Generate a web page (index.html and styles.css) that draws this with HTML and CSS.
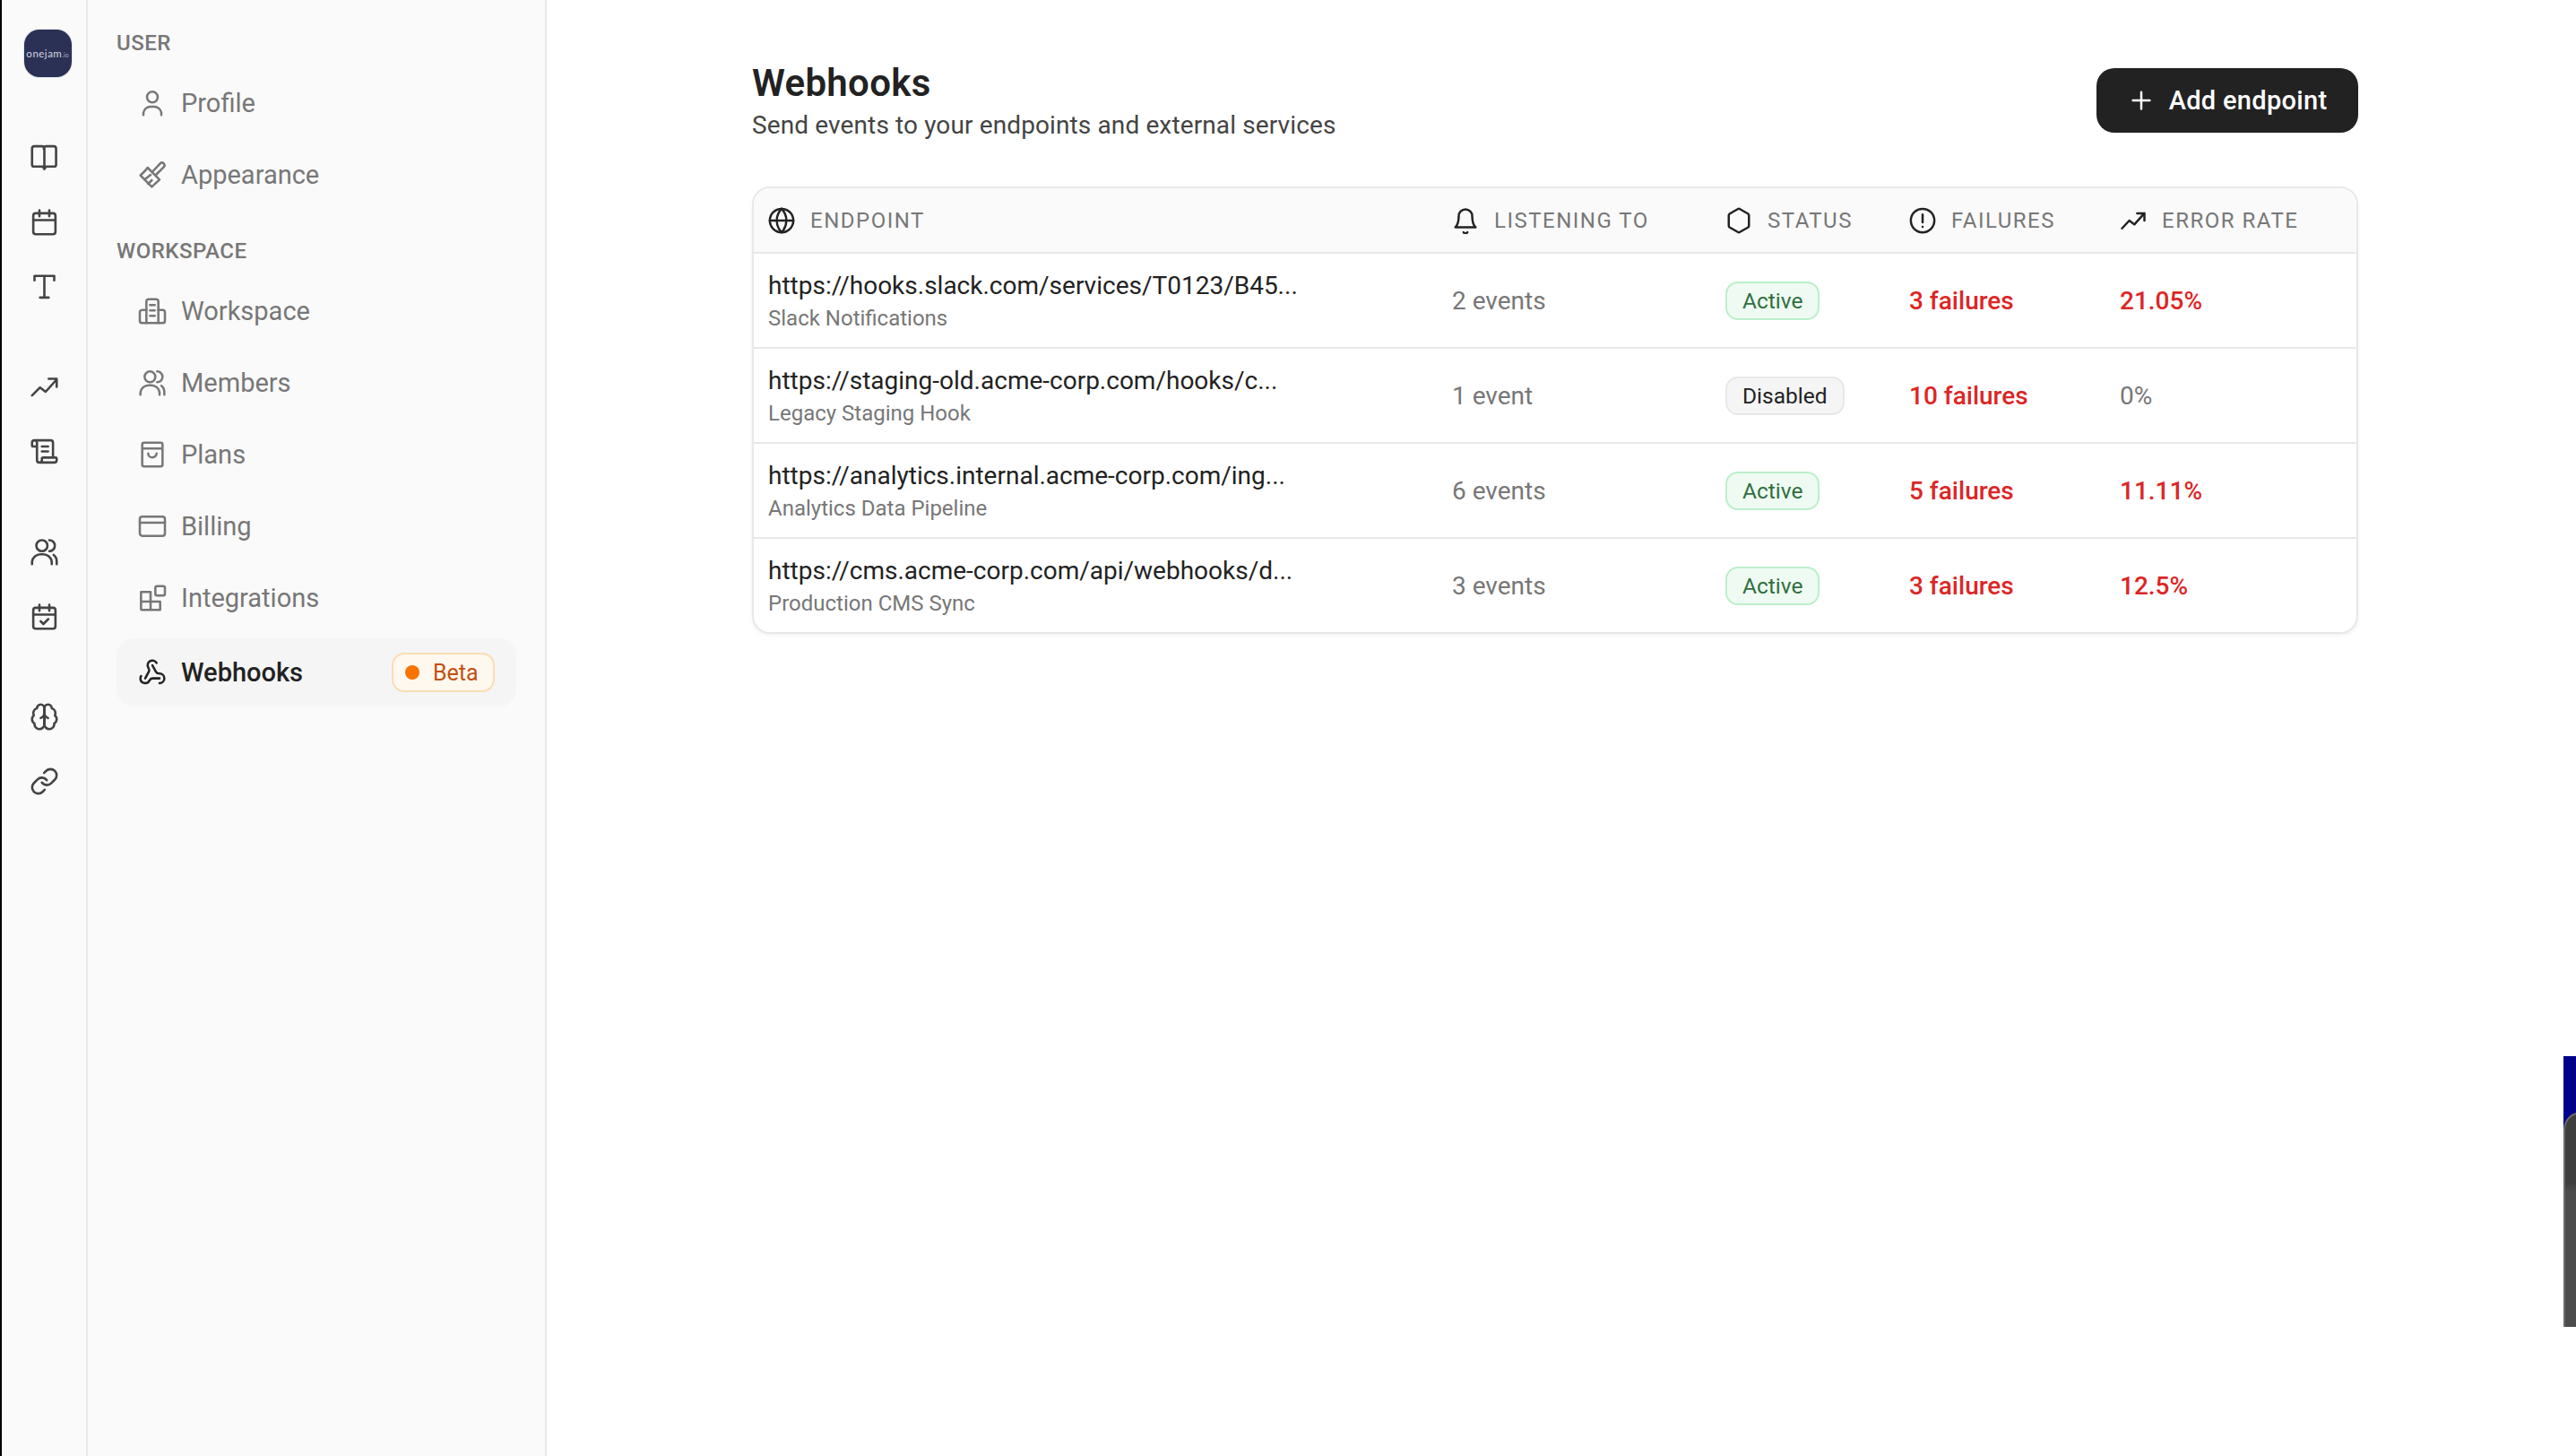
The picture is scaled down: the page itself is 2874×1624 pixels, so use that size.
FILE: index.html
```html
<!DOCTYPE html>
<html lang="en">
<head>
<meta charset="utf-8">
<title>Webhooks</title>
<link rel="stylesheet" href="styles.css">
</head>
<body>
<div class="edge"></div>
<aside class="rail">
  <div class="logo"><span>onejam<small>.io</small></span></div>
  <div class="rail-group">
    <svg class="ic" viewBox="0 0 24 24"><path d="M12 21.500l-1.300-2H3.500a1.500 1.500 0 0 1-1.500-1.500V5a2 2 0 0 1 2-2h6a2 2 0 0 1 2 2v16.500l1.300-2h6.700a1.500 1.500 0 0 0 1.500-1.500V5a2 2 0 0 0-2-2h-6a2 2 0 0 0-2 2"/></svg>
    <svg class="ic" viewBox="0 0 24 24"><rect x="3" y="5" width="18" height="17" rx="2"/><path d="M3 10.500h18M8 2.500v5M16 2.500v5"/></svg>
    <svg class="ic" viewBox="0 0 24 24"><path d="M4 7V3.500h16V7M12 3.500V21M8.500 21h7"/></svg>
  </div>
  <div class="rail-group">
    <svg class="ic" viewBox="0 0 24 24"><path d="M2 19l6.500-6.500 4.500 3.500 9-10M15.500 5.500H22V12"/></svg>
    <svg class="ic" viewBox="0 0 24 24"><path d="M15 12h-5M15 8h-5M19 17V5a2 2 0 0 0-2-2H4M8 21h12a2 2 0 0 0 2-2v-1a1 1 0 0 0-1-1H11a1 1 0 0 0-1 1v1a2 2 0 1 1-4 0V5a2 2 0 1 0-4 0v2a1 1 0 0 0 1 1h3"/></svg>
  </div>
  <div class="rail-group">
    <svg class="ic" viewBox="0 0 24 24"><circle cx="10" cy="7" r="4.500"/><path d="M2 22v-2a7 7 0 0 1 7-6h2a7 7 0 0 1 7 6v2" /><path d="M16 2.500a4.500 4.500 0 0 1 0 9M19.500 14.500a6.500 6.500 0 0 1 2.500 5.500v2"/></svg>
    <svg class="ic" viewBox="0 0 24 24"><rect x="3" y="5" width="18" height="17" rx="2"/><path d="M3 10.500h18M8 2.500v5M16 2.500v5M9 16l2.200 2.200 4-4"/></svg>
  </div>
  <div class="rail-group">
    <svg class="ic" viewBox="0 0 24 24"><path d="M12 5a3 3 0 1 0-5.997.125 4 4 0 0 0-2.526 5.770 4 4 0 0 0 .556 6.588A4 4 0 1 0 12 18Z"/><path d="M12 5a3 3 0 1 1 5.997.125 4 4 0 0 1 2.526 5.770 4 4 0 0 1-.556 6.588A4 4 0 1 1 12 18Z"/><path d="M15 13a4.500 4.500 0 0 1-3-4 4.500 4.500 0 0 1-3 4M12 5v13"/></svg>
    <svg class="ic" viewBox="0 0 24 24"><path d="M10 13a5 5 0 0 0 7.540.540l3-3a5 5 0 0 0-7.070-7.070l-1.720 1.710"/><path d="M14 11a5 5 0 0 0-7.540-.540l-3 3a5 5 0 0 0 7.070 7.070l1.710-1.710"/></svg>
  </div>
</aside>
<nav class="sidebar">
  <div class="nav-label first">USER</div>
  <a class="nav-item"><svg class="ic" viewBox="0 0 24 24"><circle cx="12" cy="7" r="4.500"/><path d="M4.500 22v-2a6 6 0 0 1 6-5h3a6 6 0 0 1 6 5v2"/></svg><span>Profile</span></a>
  <a class="nav-item"><svg class="ic" viewBox="0 0 24 24"><path d="M8 6l10 10-6.500 6L2 12.500C4 10.500 6 9 8 6z"/><path d="M5.500 16l5-4M8.500 19.500l3-3M12.500 9l6-6.500a2 2 0 0 1 3 3L15 12"/></svg><span>Appearance</span></a>
  <div class="nav-label">WORKSPACE</div>
  <a class="nav-item"><svg class="ic" viewBox="0 0 24 24"><path d="M7 22V4a2 2 0 0 1 2-2h6a2 2 0 0 1 2 2v18"/><path d="M7 11H3.500a2 2 0 0 0-2 2v7a2 2 0 0 0 2 2h17a2 2 0 0 0 2-2v-7a2 2 0 0 0-2-2H17"/><path d="M10 7h4M10 11.500h4M10 16h4"/></svg><span>Workspace</span></a>
  <a class="nav-item"><svg class="ic" viewBox="0 0 24 24"><circle cx="10" cy="7" r="4.500"/><path d="M2 22v-2a7 7 0 0 1 7-6h2a7 7 0 0 1 7 6v2"/><path d="M16 2.500a4.500 4.500 0 0 1 0 9M19.500 14.500a6.500 6.500 0 0 1 2.500 5.500v2"/></svg><span>Members</span></a>
  <a class="nav-item"><svg class="ic" viewBox="0 0 24 24"><path d="M5 2h14a1.500 1.500 0 0 1 1.500 1.500v17A1.500 1.500 0 0 1 19 22H5a1.500 1.500 0 0 1-1.500-1.500v-17A1.500 1.500 0 0 1 5 2zM3.500 7h17M8.500 11a3.500 3.500 0 0 0 7 0"/></svg><span>Plans</span></a>
  <a class="nav-item"><svg class="ic" viewBox="0 0 24 24"><rect x="1.500" y="4" width="21" height="16" rx="2"/><path d="M1.500 9h21"/></svg><span>Billing</span></a>
  <a class="nav-item"><svg class="ic" viewBox="0 0 24 24"><rect x="14.500" y="2" width="8" height="8" rx="1.500"/><path d="M2.500 7h8v8h8v7h-15a1 1 0 0 1-1-1zM2.500 15h8M10.500 15v7"/></svg><span>Integrations</span></a>
  <a class="nav-item active"><svg class="ic" viewBox="0 0 24 24"><path d="M18 16.980h-5.990c-1.100 0-1.950.940-2.480 1.900A4 4 0 0 1 2 17c.010-.700.200-1.400.570-2"/><path d="M6 17l3.130-5.780c.530-.970.100-2.180-.500-3.100a4 4 0 1 1 6.890-4.060"/><path d="M12 6l3.130 5.730C15.660 12.700 16.900 13 18 13a4 4 0 0 1 0 8"/></svg><span>Webhooks</span><span class="beta"><i></i>Beta</span></a>
</nav>
<main class="main">
  <header class="page-head">
    <div>
      <h1>Webhooks</h1>
      <p>Send events to your endpoints and external services</p>
    </div>
    <button class="add"><svg class="ic" viewBox="0 0 24 24"><path d="M12 4.500v15M4.500 12h15"/></svg>Add endpoint</button>
  </header>
  <section class="table">
    <div class="row head">
      <div class="th"><svg class="ic" viewBox="0 0 24 24"><circle cx="12" cy="12" r="10.500"/><path d="M12 1.500a15 15 0 0 0 0 21 15 15 0 0 0 0-21M1.500 12h21"/></svg>ENDPOINT</div>
      <div class="th"><svg class="ic" viewBox="0 0 24 24"><path d="M10.300 22.500a2 2 0 0 0 3.400 0M6 8a6 6 0 0 1 12 0c0 7 3 10 3 10H3s3-3 3-10"/></svg>LISTENING TO</div>
      <div class="th"><svg class="ic" viewBox="0 0 24 24"><path d="M21 16.500v-9a2 2 0 0 0-1-1.730l-7-4a2 2 0 0 0-2 0l-7 4A2 2 0 0 0 3 7.500v9a2 2 0 0 0 1 1.730l7 4a2 2 0 0 0 2 0l7-4a2 2 0 0 0 1-1.730z"/></svg>STATUS</div>
      <div class="th"><svg class="ic" viewBox="0 0 24 24"><circle cx="12" cy="12" r="10.500"/><path d="M12 6.500v7M12 17.500v.1"/></svg>FAILURES</div>
      <div class="th"><svg class="ic" viewBox="0 0 24 24"><path d="M2 19l6.500-7 4.500 3.500 9-10M15.500 5.500H22V12"/></svg>ERROR RATE</div>
    </div>
    <div class="row">
      <div class="cell"><div class="url">https://hooks.slack.com/services/T0123/B45...</div><div class="sub">Slack Notifications</div></div>
      <div class="cell muted">2 events</div>
      <div class="cell"><span class="badge on">Active</span></div>
      <div class="cell red">3 failures</div>
      <div class="cell red">21.05%</div>
    </div>
    <div class="row">
      <div class="cell"><div class="url">https://staging-old.acme-corp.com/hooks/c...</div><div class="sub">Legacy Staging Hook</div></div>
      <div class="cell muted">1 event</div>
      <div class="cell"><span class="badge off">Disabled</span></div>
      <div class="cell red">10 failures</div>
      <div class="cell muted">0%</div>
    </div>
    <div class="row">
      <div class="cell"><div class="url">https://analytics.internal.acme-corp.com/ing...</div><div class="sub">Analytics Data Pipeline</div></div>
      <div class="cell muted">6 events</div>
      <div class="cell"><span class="badge on">Active</span></div>
      <div class="cell red">5 failures</div>
      <div class="cell red">11.11%</div>
    </div>
    <div class="row">
      <div class="cell"><div class="url">https://cms.acme-corp.com/api/webhooks/d...</div><div class="sub">Production CMS Sync</div></div>
      <div class="cell muted">3 events</div>
      <div class="cell"><span class="badge on">Active</span></div>
      <div class="cell red">3 failures</div>
      <div class="cell red">12.5%</div>
    </div>
  </section>
</main>
<div class="peek"><div class="peek-inner"></div></div>
</body>
</html>
```
FILE: styles.css
```css
* { box-sizing: border-box; }
html, body { margin: 0; height: 100%; }
body {
  display: flex;
  height: 1624px;
  overflow: hidden;
  background: #fff;
  color: #222;
  font-family: "Roboto", "Liberation Sans", sans-serif;
  position: relative;
}
.edge { width: 2px; background: #000; flex: none; }
.ic {
  width: 30px;
  height: 30px;
  flex: none;
  fill: none;
  stroke: currentColor;
  stroke-width: 2;
  stroke-linecap: round;
  stroke-linejoin: round;
}
.rail {
  width: 96px;
  flex: none;
  background: #fafafa;
  border-right: 2px solid #e8e8e8;
  display: flex;
  flex-direction: column;
  align-items: center;
  padding-top: 33px;
  color: #444;
}
.rail .ic { width: 33px; height: 33px; stroke-width: 1.9; }
.logo {
  width: 53px;
  height: 53px;
  border-radius: 17px;
  background: #2b3154;
  box-shadow: 0 0 0 1px #e4e4e8;
  color: #d5d7e0;
  font-size: 11.5px;
  font-family: "Lato", "Roboto", sans-serif;
  letter-spacing: 0.5px;
  display: flex;
  align-items: center;
  justify-content: center;
  white-space: nowrap;
  margin-left: 8px;
  margin-bottom: 73px;
}
.logo small { font-size: 7px; color: #a9adc0; letter-spacing: 0; }
.rail-group {
  display: flex;
  flex-direction: column;
  gap: 39px;
  margin-bottom: 79px;
}
.sidebar {
  width: 512px;
  flex: none;
  background: #fafafa;
  border-right: 2px solid #e8e8e8;
  padding: 0 32px;
  display: flex;
  flex-direction: column;
  gap: 4px;
}
.sidebar .ic { width: 32px; height: 32px; stroke-width: 1.9; }
.nav-label {
  font-size: 24px;
  color: #777;
  font-weight: 500;
  line-height: 30px;
  letter-spacing: 0.5px;
  margin-top: 28px;
  margin-bottom: 10px;
}
.nav-label.first { margin-top: 33px; margin-bottom: 10px; }
.nav-item {
  height: 76px;
  display: flex;
  align-items: center;
  gap: 16px;
  padding-left: 24px;
  padding-right: 24px;
  font-size: 29px;
  color: #777;
  border-radius: 20px;
}
.nav-item.active {
  margin-top: 3px;
  background: #f5f5f5;
  color: #222;
  font-weight: 500;
}
.beta {
  margin-left: auto;
  width: 115px;
  height: 44px;
  border-radius: 14px;
  background: #fff8ef;
  border: 2px solid #fbdcb2;
  color: #c2500f;
  font-size: 25px;
  font-weight: 400;
  display: flex;
  align-items: center;
  padding-left: 13px;
  gap: 15px;
  flex: none;
}
.beta i {
  width: 16px;
  height: 16px;
  border-radius: 50%;
  background: #f97300;
}
.main {
  flex: 1;
  padding: 68px 243px 0 229px;
  background: #fff;
}
.page-head {
  display: flex;
  justify-content: space-between;
  align-items: flex-start;
  margin-bottom: 51px;
}
.page-head h1 {
  margin: 0;
  font-size: 42px;
  line-height: 50px;
  font-weight: 600;
  letter-spacing: 0.3px;
  color: #222;
}
.page-head p {
  margin: 5px 0 0;
  font-size: 28px;
  line-height: 34px;
  letter-spacing: 0.12px;
  color: #444;
}
.add {
  margin-top: 8px;
  height: 72px;
  width: 292px;
  border: 0;
  border-radius: 20px;
  background: #222;
  color: #fff;
  font: 500 29px "Roboto", "Liberation Sans", sans-serif;
  letter-spacing: 0.3px;
  display: flex;
  align-items: center;
  justify-content: center;
  gap: 16px;
}
.table {
  border: 2px solid #e8e8e8;
  border-radius: 20px;
  overflow: hidden;
  box-shadow: 0 2px 4px rgba(0,0,0,.06);
}
.row {
  display: grid;
  grid-template-columns: 763px 305px 205px 235px 1fr;
  height: 106px;
  align-items: center;
  border-top: 2px solid #e8e8e8;
}
.row.head {
  height: 71px;
  border-top: 0;
  background: #fafafa;
}
.th {
  display: flex;
  align-items: center;
  gap: 17px;
  padding-left: 16px;
  font-size: 24px;
  letter-spacing: 1.5px;
  color: #777;
}
.th .ic { color: #222; }
.cell { padding-left: 16px; font-size: 28px; }
.url { font-size: 28px; line-height: 36px; padding-top: 1px; color: #222; }
.sub { font-size: 24px; line-height: 32px; color: #777; margin-top: 2px; }
.muted { color: #777; }
.red { color: #dc2626; font-weight: 500; }
.badge {
  display: inline-block;
  height: 43px;
  line-height: 39px;
  padding: 0 17px;
  border-radius: 14px;
  font-size: 24.5px;
  border: 2px solid;
  vertical-align: middle;
}
.badge.on { background: #effbf2; border-color: #bcefca; color: #2f6f40; }
.badge.off { background: #f5f5f5; border-color: #e8e8e8; color: #222; }
.peek {
  position: absolute;
  right: 0;
  top: 1178px;
  width: 14px;
  height: 302px;
  background: #00008a;
  overflow: hidden;
}
.peek-inner {
  position: absolute;
  left: 0;
  top: 62px;
  width: 30px;
  height: 260px;
  background: linear-gradient(#3e3e3e 0, #3e3e3e 30%, #4c4c4c 34%);
  border-left: 2px solid #6a6a6a;
  border-top: 2px solid #6a6a6a;
  border-radius: 20px 0 0 0;
}
```
